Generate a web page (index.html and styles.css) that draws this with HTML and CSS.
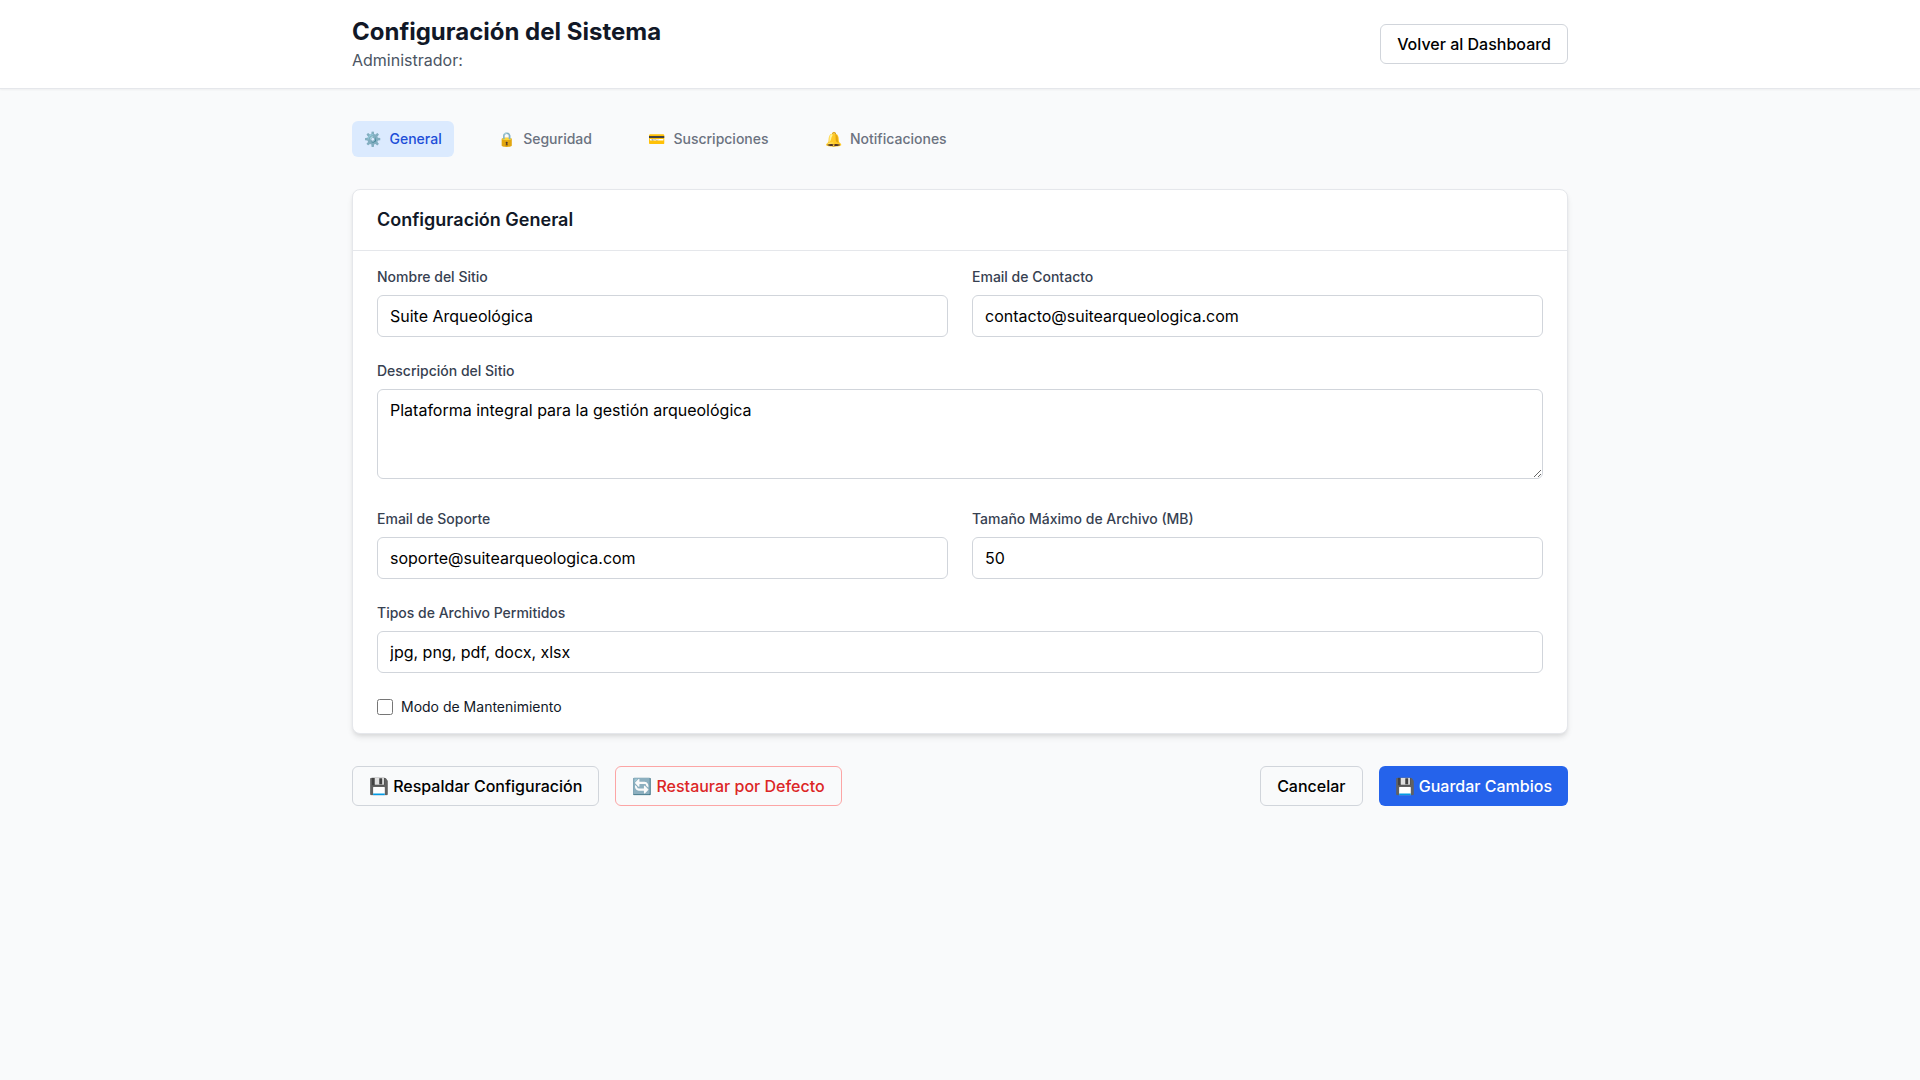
FILE: index.html
```html
<!DOCTYPE html>
<html lang="es">
<head>
<meta charset="utf-8">
<title>Configuración del Sistema</title>
<link rel="stylesheet" href="styles.css">
</head>
<body>
<header class="topbar">
    <div class="topbar-inner">
        <div>
            <h1>Configuración del Sistema</h1>
            <p class="subtitle">Administrador:</p>
        </div>
        <button class="btn" type="button">Volver al Dashboard</button>
    </div>
</header>
<main class="content">
    <nav class="tabs">
        <a class="tab active" href="#"><span class="tab-icon">⚙️</span>General</a>
        <a class="tab" href="#"><span class="tab-icon">🔒</span>Seguridad</a>
        <a class="tab" href="#"><span class="tab-icon">💳</span>Suscripciones</a>
        <a class="tab" href="#"><span class="tab-icon">🔔</span>Notificaciones</a>
    </nav>
    <section class="card">
        <h2 class="card-title">Configuración General</h2>
        <form class="card-body">
            <div class="field">
                <label for="siteName">Nombre del Sitio</label>
                <input id="siteName" type="text" value="Suite Arqueológica">
            </div>
            <div class="field">
                <label for="contactEmail">Email de Contacto</label>
                <input id="contactEmail" type="email" value="contacto@suitearqueologica.com">
            </div>
            <div class="field wide">
                <label for="siteDesc">Descripción del Sitio</label>
                <textarea id="siteDesc" rows="3">Plataforma integral para la gestión arqueológica</textarea>
            </div>
            <div class="field">
                <label for="supportEmail">Email de Soporte</label>
                <input id="supportEmail" type="email" value="soporte@suitearqueologica.com">
            </div>
            <div class="field">
                <label for="maxSize">Tamaño Máximo de Archivo (MB)</label>
                <input id="maxSize" type="text" value="50">
            </div>
            <div class="field wide">
                <label for="fileTypes">Tipos de Archivo Permitidos</label>
                <input id="fileTypes" type="text" value="jpg, png, pdf, docx, xlsx">
            </div>
            <label class="check wide"><input type="checkbox">Modo de Mantenimiento</label>
        </form>
    </section>
    <div class="actions">
        <div class="action-group">
            <button class="btn" type="button">💾 Respaldar Configuración</button>
            <button class="btn btn-danger" type="button">🔄 Restaurar por Defecto</button>
        </div>
        <div class="action-group">
            <button class="btn" type="button">Cancelar</button>
            <button class="btn btn-primary" type="button">💾 Guardar Cambios</button>
        </div>
    </div>
</main>
</body>
</html>
```

FILE: styles.css
```css
* {
    box-sizing: border-box;
}
body {
    margin: 0;
    min-height: 100vh;
    background-color: #f9fafb;
    color: #111827;
    font-family: Inter, "Noto Sans", sans-serif;
    line-height: 1.5;
}
.topbar {
    height: 89px;
    background-color: white;
    border-bottom: 1px solid #e5e7eb;
    box-shadow: 0 1px 2px rgba(0, 0, 0, 0.05);
}
.topbar-inner {
    max-width: 1280px;
    height: 88px;
    margin: 0 auto;
    padding: 0 32px;
    display: flex;
    align-items: center;
    justify-content: space-between;
}
h1 {
    margin: 0;
    font-size: 24px;
    line-height: 32px;
    font-weight: 700;
}
.subtitle {
    margin: 0;
    font-size: 16px;
    line-height: 24px;
    color: #4b5563;
}
.btn {
    height: 40px;
    padding: 0 16px;
    border: 1px solid #d1d5db;
    border-radius: 6px;
    background-color: transparent;
    color: #000;
    font-family: inherit;
    font-size: 16px;
    font-weight: 500;
}
.topbar .btn {
    background-color: white;
}
.btn-danger {
    border-color: #fca5a5;
    color: #dc2626;
}
.btn-primary {
    border: none;
    background-color: #2563eb;
    color: white;
}
.content {
    max-width: 1280px;
    margin: 0 auto;
    padding: 32px;
}
.tabs {
    display: flex;
    gap: 32px;
    margin-bottom: 32px;
}
.tab {
    display: block;
    height: 36px;
    padding: 8px 12px;
    border-radius: 6px;
    color: #6b7280;
    font-size: 14px;
    line-height: 20px;
    font-weight: 500;
    text-decoration: none;
}
.tab.active {
    background-color: #dbeafe;
    color: #1d4ed8;
}
.tab-icon {
    margin-right: 8.5px;
}
.card {
    background-color: white;
    border: 1px solid #e5e7eb;
    border-radius: 8px;
    box-shadow: 0 4px 6px -1px rgba(0, 0, 0, 0.1), 0 2px 4px -1px rgba(0, 0, 0, 0.06);
}
.card-title {
    margin: 0;
    padding: 16px 24px;
    border-bottom: 1px solid #e5e7eb;
    font-size: 18px;
    line-height: 28px;
    font-weight: 600;
}
.card-body {
    padding: 16px 24px;
    display: grid;
    grid-template-columns: 1fr 1fr;
    gap: 24px;
}
.wide {
    grid-column: 1 / -1;
}
.field label {
    display: block;
    margin-bottom: 8px;
    font-size: 14px;
    line-height: 20px;
    font-weight: 500;
    color: #374151;
}
.field input,
.field textarea {
    width: 100%;
    padding: 8px 12px;
    border: 1px solid #d1d5db;
    border-radius: 6px;
    background-color: white;
    color: #000;
    font-family: inherit;
    font-size: 16px;
    line-height: 24px;
}
.field input {
    display: block;
    height: 42px;
}
.field textarea {
    height: 90px;
}
.check {
    display: flex;
    align-items: center;
    gap: 8px;
    font-size: 14px;
    line-height: 20px;
    color: #111827;
}
.check input {
    width: 16px;
    height: 16px;
    margin: 0;
}
.actions {
    display: flex;
    justify-content: space-between;
    margin-top: 32px;
}
.action-group {
    display: flex;
    gap: 16px;
}
.action-group:first-child .btn {
    padding: 0 15.9px;
}
```
